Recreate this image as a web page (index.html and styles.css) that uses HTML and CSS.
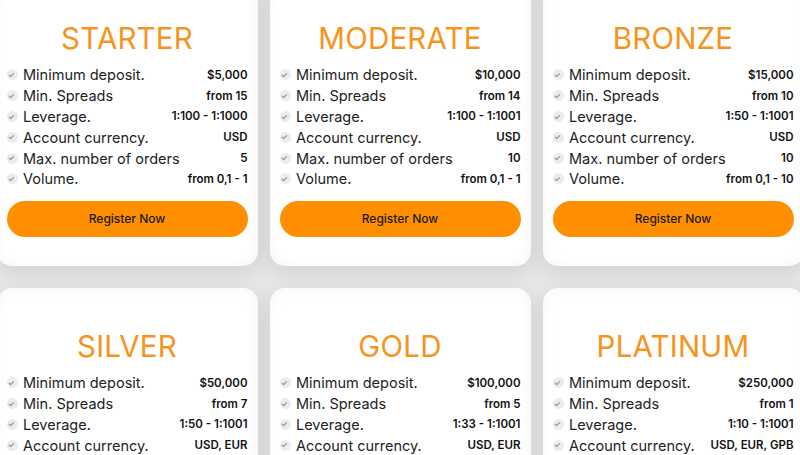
FILE: index.html
```html
<!DOCTYPE html>
<html lang="en">
<head>
<meta charset="utf-8">
<title>Account types</title>
<link rel="stylesheet" href="styles.css">
</head>
<body>
<main class="plans">
  <section class="card">
    <h2 class="title">STARTER</h2>
    <ul class="features">
      <li><span class="check"></span><span class="label">Minimum deposit.</span><span class="value">$5,000</span></li>
      <li><span class="check"></span><span class="label">Min. Spreads</span><span class="value">from 15</span></li>
      <li><span class="check"></span><span class="label">Leverage.</span><span class="value">1:100 - 1:1000</span></li>
      <li><span class="check"></span><span class="label">Account currency.</span><span class="value">USD</span></li>
      <li><span class="check"></span><span class="label">Max. number of orders</span><span class="value">5</span></li>
      <li><span class="check"></span><span class="label">Volume.</span><span class="value">from 0,1 - 1</span></li>
    </ul>
    <a class="btn" href="#">Register Now</a>
  </section>
  <section class="card">
    <h2 class="title">MODERATE</h2>
    <ul class="features">
      <li><span class="check"></span><span class="label">Minimum deposit.</span><span class="value">$10,000</span></li>
      <li><span class="check"></span><span class="label">Min. Spreads</span><span class="value">from 14</span></li>
      <li><span class="check"></span><span class="label">Leverage.</span><span class="value">1:100 - 1:1001</span></li>
      <li><span class="check"></span><span class="label">Account currency.</span><span class="value">USD</span></li>
      <li><span class="check"></span><span class="label">Max. number of orders</span><span class="value">10</span></li>
      <li><span class="check"></span><span class="label">Volume.</span><span class="value">from 0,1 - 1</span></li>
    </ul>
    <a class="btn" href="#">Register Now</a>
  </section>
  <section class="card">
    <h2 class="title">BRONZE</h2>
    <ul class="features">
      <li><span class="check"></span><span class="label">Minimum deposit.</span><span class="value">$15,000</span></li>
      <li><span class="check"></span><span class="label">Min. Spreads</span><span class="value">from 10</span></li>
      <li><span class="check"></span><span class="label">Leverage.</span><span class="value">1:50 - 1:1001</span></li>
      <li><span class="check"></span><span class="label">Account currency.</span><span class="value">USD</span></li>
      <li><span class="check"></span><span class="label">Max. number of orders</span><span class="value">10</span></li>
      <li><span class="check"></span><span class="label">Volume.</span><span class="value">from 0,1 - 10</span></li>
    </ul>
    <a class="btn" href="#">Register Now</a>
  </section>
  <section class="card">
    <h2 class="title">SILVER</h2>
    <ul class="features">
      <li><span class="check"></span><span class="label">Minimum deposit.</span><span class="value">$50,000</span></li>
      <li><span class="check"></span><span class="label">Min. Spreads</span><span class="value">from 7</span></li>
      <li><span class="check"></span><span class="label">Leverage.</span><span class="value">1:50 - 1:1001</span></li>
      <li><span class="check"></span><span class="label">Account currency.</span><span class="value">USD, EUR</span></li>
      <li><span class="check"></span><span class="label">Max. number of orders</span><span class="value">20</span></li>
      <li><span class="check"></span><span class="label">Volume.</span><span class="value">from 0,1 - 20</span></li>
    </ul>
    <a class="btn" href="#">Register Now</a>
  </section>
  <section class="card">
    <h2 class="title">GOLD</h2>
    <ul class="features">
      <li><span class="check"></span><span class="label">Minimum deposit.</span><span class="value">$100,000</span></li>
      <li><span class="check"></span><span class="label">Min. Spreads</span><span class="value">from 5</span></li>
      <li><span class="check"></span><span class="label">Leverage.</span><span class="value">1:33 - 1:1001</span></li>
      <li><span class="check"></span><span class="label">Account currency.</span><span class="value">USD, EUR</span></li>
      <li><span class="check"></span><span class="label">Max. number of orders</span><span class="value">50</span></li>
      <li><span class="check"></span><span class="label">Volume.</span><span class="value">from 0,1 - 50</span></li>
    </ul>
    <a class="btn" href="#">Register Now</a>
  </section>
  <section class="card">
    <h2 class="title">PLATINUM</h2>
    <ul class="features">
      <li><span class="check"></span><span class="label">Minimum deposit.</span><span class="value">$250,000</span></li>
      <li><span class="check"></span><span class="label">Min. Spreads</span><span class="value">from 1</span></li>
      <li><span class="check"></span><span class="label">Leverage.</span><span class="value">1:10 - 1:1001</span></li>
      <li><span class="check"></span><span class="label">Account currency.</span><span class="value">USD, EUR, GPB</span></li>
      <li><span class="check"></span><span class="label">Max. number of orders</span><span class="value">100</span></li>
      <li><span class="check"></span><span class="label">Volume.</span><span class="value">from 0,1 - 100</span></li>
    </ul>
    <a class="btn" href="#">Register Now</a>
  </section>
</main>
</body>
</html>
```
FILE: styles.css
```css
html, body {
  margin: 0;
  padding: 0;
  height: 100%;
  overflow: hidden;
}
body {
  background: #e7e7e7;
  font-family: Inter, "Noto Sans", sans-serif;
  color: #1e1e1e;
}
.plans {
  display: grid;
  grid-template-columns: repeat(3, 261px);
  column-gap: 12px;
  row-gap: 22px;
  justify-content: center;
  margin-top: -20px;
}
.card {
  background: #fff;
  border-radius: 15px;
  box-shadow: 0 6px 22px rgba(0, 0, 0, 0.1), inset 0 0 16px rgba(0, 0, 0, 0.035);
  padding: 40px 10px 29px;
  display: flex;
  flex-direction: column;
}
.title {
  margin: 0;
  text-align: center;
  font-size: 29.5px;
  line-height: 36px;
  font-weight: 400;
  color: #f7941d;
  letter-spacing: 0.2px;
}
.features {
  list-style: none;
  margin: 8.5px 0 0;
  padding: 0;
}
.features li {
  display: flex;
  align-items: center;
  height: 20.8px;
}
.check {
  width: 11px;
  height: 11px;
  border-radius: 50%;
  background: #ececec;
  flex: none;
  position: relative;
  margin-right: 5.5px;
}
.check::after {
  content: "";
  position: absolute;
  left: 3.6px;
  top: 2.6px;
  width: 2px;
  height: 3.6px;
  border: solid #8a8a8a;
  border-width: 0 1px 1px 0;
  transform: rotate(45deg);
}
.label {
  font-size: 14.5px;
  color: #222;
  flex: 1;
  white-space: nowrap;
}
.value {
  font-size: 11.5px;
  font-weight: 600;
  color: #111;
  white-space: nowrap;
}
.btn {
  margin-top: 11.6px;
  height: 36px;
  border-radius: 18px;
  background: #ff8f00;
  color: #1a1a1a;
  text-decoration: none;
  font-size: 12px;
  font-weight: 500;
  display: flex;
  align-items: center;
  justify-content: center;
}
```
